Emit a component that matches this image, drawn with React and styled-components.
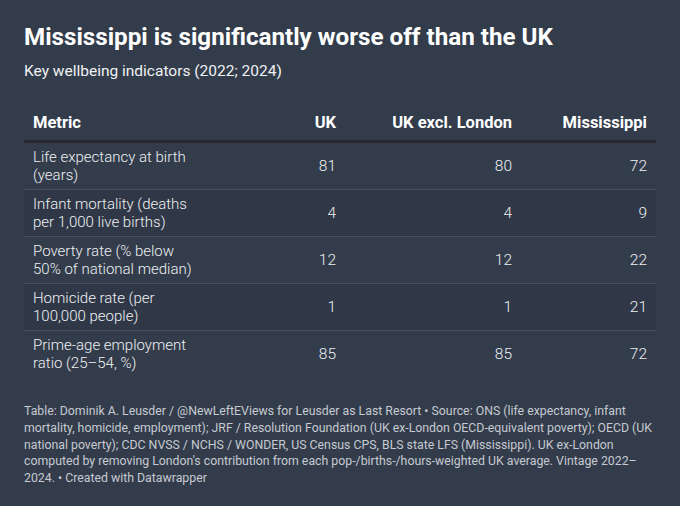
import React from 'react';
import styled, { createGlobalStyle } from 'styled-components';

const GlobalStyle = createGlobalStyle`
  html, body {
    margin: 0;
    padding: 0;
    background: #333c4b;
  }
  body {
    font-family: Roboto, "Liberation Sans", Arial, sans-serif;
    color: #ffffff;
  }
`;

const Chart = styled.div`
  box-sizing: border-box;
  width: 680px;
  height: 506px;
  padding: 20px 24px 0 24px;
  background: #333c4b;
`;

const Title = styled.h1`
  margin: 0;
  font-size: 24.2px;
  line-height: 34px;
  font-weight: 700;
  color: #ffffff;
`;

const Subtitle = styled.p`
  margin: 6px 0 0 0;
  font-size: 15.5px;
  line-height: 22px;
  font-weight: 400;
  color: #f0f1f3;
`;

const Table = styled.table`
  width: 632px;
  margin-top: 22px;
  border-collapse: collapse;
  table-layout: fixed;
`;

const HeadCell = styled.th`
  padding: 0 9px 8px 9px;
  height: 28px;
  text-align: ${props => (props.$left ? 'left' : 'right')};
  font-weight: 700;
  font-size: 16.5px;
  color: #ffffff;
  border-bottom: 3px solid #28282f;
  vertical-align: bottom;
  white-space: nowrap;
`;

const Row = styled.tr`
  background: ${props => (props.$alt ? '#303847' : 'transparent')};
  border-bottom: ${props => (props.$last ? 'none' : '1px solid #465060')};
`;

const Cell = styled.td`
  box-sizing: border-box;
  height: 46px;
  padding: 5px 9px 5px 9px;
  text-align: ${props => (props.$left ? 'left' : 'right')};
  font-weight: 300;
  font-size: ${props => (props.$left ? '15px' : '15.5px')};
  line-height: 18px;
  color: #eef0f2;
  vertical-align: middle;
`;

const Notes = styled.p`
  margin: 26px 0 0 0;
  font-size: 12.3px;
  line-height: 16.8px;
  font-weight: 400;
  color: #c6cad1;
  padding-right: 4px;
`;

const columns = ['186px', '135px', '176px', '135px'];

const rows = [
  ['Life expectancy at birth (years)', 81, 80, 72],
  ['Infant mortality (deaths per 1,000 live births)', 4, 4, 9],
  ['Poverty rate (% below 50% of national median)', 12, 12, 22],
  ['Homicide rate (per 100,000 people)', 1, 1, 21],
  ['Prime-age employment ratio (25\u201354, %)', 85, 85, 72],
];

const App = () => (
  <>
    <GlobalStyle />
    <Chart>
      <Title>Mississippi is significantly worse off than the UK</Title>
      <Subtitle>Key wellbeing indicators (2022; 2024)</Subtitle>
      <Table>
        <colgroup>
          {columns.map((w, i) => (
            <col key={i} style={{ width: w }} />
          ))}
        </colgroup>
        <thead>
          <tr>
            <HeadCell $left>Metric</HeadCell>
            <HeadCell>UK</HeadCell>
            <HeadCell>UK excl. London</HeadCell>
            <HeadCell>Mississippi</HeadCell>
          </tr>
        </thead>
        <tbody>
          {rows.map((row, i) => (
            <Row key={row[0]} $alt={i % 2 === 1} $last={i === rows.length - 1}>
              <Cell $left>{row[0]}</Cell>
              <Cell>{row[1]}</Cell>
              <Cell>{row[2]}</Cell>
              <Cell>{row[3]}</Cell>
            </Row>
          ))}
        </tbody>
      </Table>
      <Notes>
        Table: Dominik A. Leusder / @NewLeftEViews for Leusder as Last Resort •
        Source: ONS (life expectancy, infant mortality, homicide, employment);
        JRF / Resolution Foundation (UK ex-London OECD-equivalent poverty); OECD
        (UK national poverty); CDC NVSS / NCHS / WONDER, US Census CPS, BLS state
        LFS (Mississippi). UK ex-London computed by removing London's
        contribution from each pop-/births-/hours-weighted UK average. Vintage
        2022–2024. • Created with Datawrapper
      </Notes>
    </Chart>
  </>
);

export default App;
